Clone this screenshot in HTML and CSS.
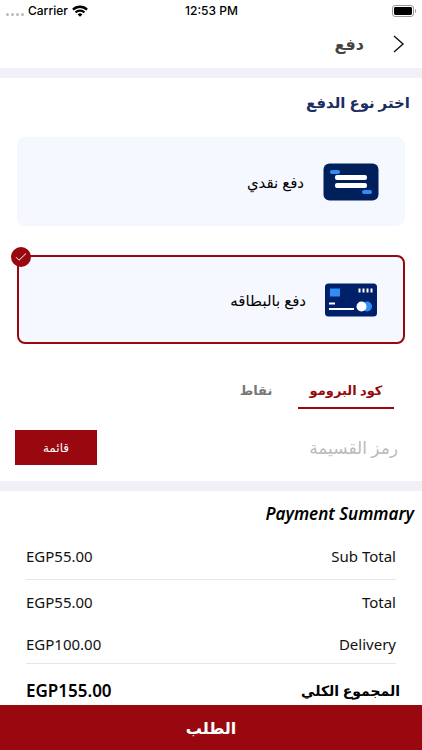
FILE: index.html
```
<!DOCTYPE html>
<html lang="ar" dir="rtl">
<head>
    <meta charset="UTF-8">
    <meta name="viewport" content="width=device-width, initial-scale=1.0">
    <title>دفع</title>
    <link rel="stylesheet" href="styles.css">
</head>
<body>
    <div class="status-bar" dir="ltr">
        <div class="carrier">
            <span class="dots"><i></i><i></i><i></i><i></i></span>
            <span>Carrier</span>
            <svg width="16" height="12" viewBox="0 0 16 12" fill="none" stroke="#000" stroke-width="2.4">
                <path d="M1 4.600a10 10 0 0 1 14 0"/>
                <path d="M3.600 7.500a6.200 6.200 0 0 1 8.800 0"/>
                <path d="M8 11.800 5.600 9.400a3.400 3.400 0 0 1 4.800 0z" fill="#000" stroke="none"/>
            </svg>
        </div>
        <span class="clock">12:53 PM</span>
        <div class="battery">
            <svg width="25" height="12" viewBox="0 0 25 12">
                <rect x=".5" y=".5" width="21" height="11" rx="2.6" fill="none" stroke="#999"/>
                <rect x="2" y="2" width="18" height="8" rx="1.4"/>
                <path d="M23 4v4c1.6-.5 1.6-3.5 0-4z" fill="#999"/>
            </svg>
        </div>
    </div>

    <header class="header">
        <button class="back" type="button" aria-label="رجوع">
            <svg width="12" height="18" viewBox="0 0 12 18" fill="none" stroke="#111" stroke-width="1.4">
                <path d="M1 1l9 8-9 8"/>
            </svg>
        </button>
        <h1>دفع</h1>
    </header>

    <main>
        <section class="payment">
            <h2>اختر نوع الدفع</h2>
            <label class="card">
                <input type="radio" name="method" value="cash">
                <svg width="56" height="38" viewBox="0 0 56 38">
                    <rect x=".5" y=".5" width="55" height="37" rx="6" fill="#00205b"/>
                    <rect x="7" y="7" width="10" height="4" rx="2" fill="#2e8df7"/>
                    <rect x="39" y="27" width="10" height="4" rx="2" fill="#2e8df7"/>
                    <rect x="12" y="12" width="32" height="5" rx="2" fill="#fff"/>
                    <rect x="12" y="20" width="32" height="5" rx="2" fill="#fff"/>
                </svg>
                <span>دفع نقدي</span>
            </label>
            <label class="card">
                <input type="radio" name="method" value="card" checked>
                <span class="check">
                    <svg width="12" height="10" viewBox="0 0 12 10" fill="none" stroke="#fff" stroke-width="1">
                        <path d="M1 5.2l3 3L11 1.5"/>
                    </svg>
                </span>
                <svg width="54" height="34" viewBox="2 0 54 34">
                    <rect x="2" y=".5" width="52" height="33" rx="3.5" fill="#002169"/>
                    <rect x="7" y="5.5" width="10" height="8" fill="#2e8df7"/>
                    <path d="M36.500 5.500v4M40.500 5.500v4M44.500 5.500v4M48.500 5.500v4" stroke="#fff" stroke-width="2"/>
                    <path d="M6 20.500h6M6 26h25" stroke="#fff" stroke-width="2"/>
                    <circle cx="44" cy="23.5" r="5" fill="#2e8df7"/>
                    <circle cx="38.5" cy="23.5" r="5" fill="#fff"/>
                </svg>
                <span>دفع بالبطاقه</span>
            </label>
        </section>

        <nav class="tabs">
            <button class="tab active" type="button">كود البرومو</button>
            <button class="tab" type="button">نقاط</button>
        </nav>
        <form class="coupon">
            <input type="text" placeholder="رمز القسيمة" aria-label="رمز القسيمة">
            <button type="button">قائمة</button>
        </form>

        <section class="summary">
            <h2>Payment Summary</h2>
            <table>
                <tr class="line"><th>Sub Total</th><td>EGP55.00</td></tr>
                <tr><th>Total</th><td>EGP55.00</td></tr>
                <tr class="line delivery"><th>Delivery</th><td>EGP100.00</td></tr>
            </table>
            <p class="grand-total"><span>المجموع الكلي</span><span class="amount">EGP155.00</span></p>
        </section>
    </main>

    <button class="order" type="button">الطلب</button>
</body>
</html>
```
FILE: styles.css
```
* {
    box-sizing: border-box;
}
body {
    font-family: "Noto Sans", "DejaVu Sans", sans-serif;
    background-color: #fff;
    color: #111;
    margin: 0;
    display: flex;
    flex-direction: column;
    height: 100vh;
}
button, input {
    font-family: inherit;
}
button {
    border: none;
    background: none;
    padding: 0;
    cursor: pointer;
}
h1, h2, p {
    margin: 0;
}

.status-bar {
    display: grid;
    grid-template-columns: 1fr auto 1fr;
    align-items: center;
    height: 21px;
    padding: 0 5px 0 6px;
    font-family: Inter, sans-serif;
    font-size: 12px;
    font-weight: 500;
    color: #000;
}
.carrier {
    display: flex;
    align-items: center;
    gap: 4px;
}
.dots {
    display: flex;
    gap: 2px;
    padding-top: 7px;
}
.dots i {
    width: 3px;
    height: 3px;
    border-radius: 50%;
    background-color: #bbb;
}
.battery {
    display: flex;
    justify-content: flex-end;
}

.header {
    display: flex;
    align-items: center;
    gap: 29px;
    height: 57px;
    padding: 0 17px 2px;
    border-bottom: 10px solid #f1f0f7;
}
.back {
    display: flex;
}
.header h1 {
    font-size: 16px;
    line-height: 24px;
    color: #444;
}

main {
    flex: 1;
    min-height: 0;
    overflow: hidden auto;
}
.payment {
    display: flex;
    flex-direction: column;
    padding: 8px 17px 0;
}
.payment h2 {
    font-size: 15px;
    line-height: 32px;
    margin: 0 -5px 19px 0;
    color: #1b2d63;
}
.card {
    position: relative;
    display: flex;
    align-items: center;
    gap: 19px;
    height: 89px;
    padding: 0 24px;
    border: 2px solid #f5f8ff;
    border-radius: 8px;
    background-color: #f5f8ff;
    font-size: 15px;
    color: #000;
    cursor: pointer;
}
.card + .card {
    margin-top: 29px;
}
.card:has(input:checked) {
    border-color: #98080e;
}
.card input {
    position: absolute;
    opacity: 0;
}
.check {
    position: absolute;
    top: -10px;
    left: -8px;
    display: flex;
    align-items: center;
    justify-content: center;
    width: 20px;
    height: 20px;
    border-radius: 50%;
    background-color: #98080e;
}

.tabs {
    display: flex;
    padding: 29px 28px 0;
}
.tab {
    width: 96px;
    height: 36px;
    border-bottom: 2px solid transparent;
    font-size: 13px;
    font-weight: bold;
    color: #777;
}
.tab.active {
    border-color: #98080e;
    color: #98080e;
}
.tab + .tab {
    width: 84px;
}
.coupon {
    display: flex;
    align-items: center;
    justify-content: space-between;
    padding: 21px 24px 16px 15px;
    border-bottom: 10px solid #f1f0f7;
}
.coupon input {
    flex: 1;
    min-width: 0;
    border: none;
    padding: 0;
    font-size: 17px;
}
.coupon input::placeholder {
    color: #bbb;
}
.coupon button {
    width: 82px;
    height: 35px;
    background-color: #98080e;
    color: #fff;
    font-size: 12px;
}

.summary h2 {
    padding: 10px 8px 0;
    font-size: 17px;
    line-height: 26px;
    font-style: italic;
    font-weight: 600;
    color: #000;
}
.summary table {
    width: calc(100% - 52px);
    margin: 6px 26px 0;
    border-collapse: collapse;
    font-size: 15px;
}
.summary th, .summary td {
    height: 46px;
    padding: 0;
    font-weight: normal;
    text-align: right;
}
.summary td {
    direction: ltr;
    text-align: left;
}
.summary .line {
    border-bottom: 1px solid #e6e6e6;
}
.summary .delivery th, .summary .delivery td {
    height: 38px;
}
.grand-total {
    display: flex;
    justify-content: space-between;
    padding: 14px 22px 0 26px;
    font-size: 14px;
    line-height: 26px;
    font-weight: 600;
    color: #000;
}
.amount {
    font-size: 17px;
}

.order {
    height: 45px;
    flex-shrink: 0;
    background-color: #98080e;
    color: #fff;
    font-size: 16px;
    font-weight: bold;
}
```
